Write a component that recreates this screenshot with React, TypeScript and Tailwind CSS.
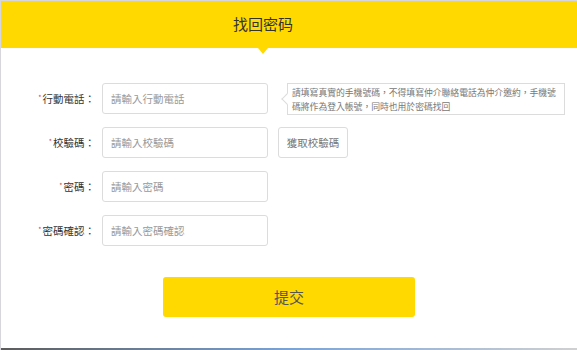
import React from 'react'

const FONT = { fontFamily: '"Noto Sans CJK TC", "Noto Sans CJK SC", "Liberation Sans", sans-serif' }

const fields = [
  { label: '行動電話', placeholder: '請輸入行動電話', extra: 'tip' },
  { label: '校驗碼', placeholder: '請輸入校驗碼', extra: 'code' },
  { label: '密碼', placeholder: '請輸入密碼', extra: null },
  { label: '密碼確認', placeholder: '請輸入密碼確認', extra: null },
]

function Tip() {
  return (
    <div className="relative ml-[19px] h-[32px] w-[278px] border border-[#dcdcdc] bg-white px-[4px] py-[2px] text-[8.8px] leading-[14px] text-[#777]">
      <div className="absolute left-[-5px] top-[11px] h-[8px] w-[8px] rotate-45 border-b border-l border-[#dcdcdc] bg-white" />
      <div className="relative whitespace-nowrap">請填寫真實的手機號碼，不得填寫仲介聯絡電話為仲介邀約，手機號</div>
      <div className="relative whitespace-nowrap">碼將作為登入帳號，同時也用於密碼找回</div>
    </div>
  )
}

export default function App() {
  return (
    <div style={FONT} className="flex h-[350px] w-[577px] flex-col overflow-hidden border-l border-t border-[#d6d6dc] bg-white">
      {/* header */}
      <div className="relative h-[47px] shrink-0 bg-[#ffd900]">
        <div className="flex h-full w-[524px] items-center justify-center">
          <span className="text-[15px] text-[#333]">找回密码</span>
        </div>
        <div className="absolute left-[257px] top-[47px] h-0 w-0 border-l-[5px] border-r-[5px] border-t-[6px] border-l-transparent border-r-transparent border-t-[#ffd900]" />
      </div>

      {/* form */}
      <div className="mt-[35px] flex flex-col gap-[13px]">
        {fields.map((f) => (
          <div key={f.label} className="flex h-[31px] items-center">
            <div className="w-[94px] text-right text-[10.5px] text-[#333]">
              <span className="relative top-[-3px] mr-[1px] text-[7px] text-[#e53935]">*</span>
              {f.label}：
            </div>
            <div className="ml-[7px] flex h-[31px] w-[166px] items-center rounded-[3px] border border-[#dcdcdc] bg-white pl-[8px] text-[10.5px] text-[#999]">
              {f.placeholder}
            </div>
            {f.extra === 'tip' && <Tip />}
            {f.extra === 'code' && (
              <div className="ml-[10px] flex h-[31px] w-[70px] items-center justify-center rounded-[3px] border border-[#dcdcdc] bg-white text-[10.5px] text-[#777]">
                獲取校驗碼
              </div>
            )}
          </div>
        ))}
      </div>

      <div className="mt-[31px] flex pl-[162px]">
        <div className="flex h-[40px] w-[252px] items-center justify-center rounded-[3px] bg-[#ffd900] text-[15px] text-[#555]">
          提交
        </div>
      </div>

      <div className="flex-1" />
      <div className="h-[2px] shrink-0 bg-linear-to-r from-[#5c5c5c] via-[#7aa3d6] to-[#d0d0d0]" />
    </div>
  )
}
